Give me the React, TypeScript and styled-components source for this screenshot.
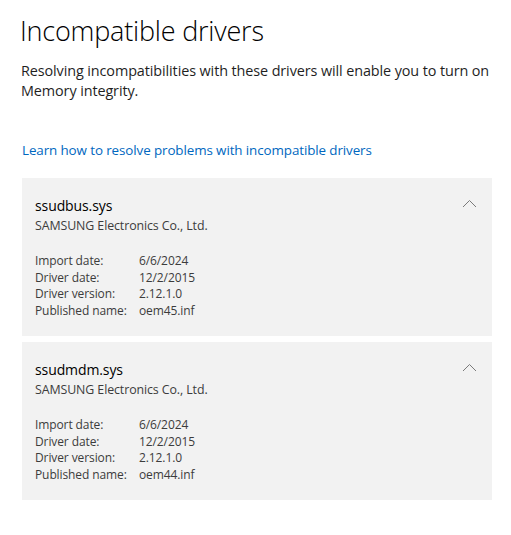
import React from 'react'
import styled, { createGlobalStyle } from 'styled-components'

const GlobalStyle = createGlobalStyle`
  html, body {
    margin: 0;
    padding: 0;
    background: #ffffff;
  }

  body {
    font-family: 'Open Sans', 'Noto Sans', sans-serif;
    color: #1a1a1a;
  }
`

const Page = styled.main`
  display: flex;
  flex-direction: column;
  width: 511px;
  padding: 13px 19px 0 20px;
  box-sizing: border-box;
`

const Title = styled.h1`
  margin: 0;
  font-size: 27px;
  font-weight: 300;
  line-height: 36px;
  color: #000;
  letter-spacing: -0.2px;
`

const Description = styled.p`
  margin: 12px 0 0 1px;
  font-size: 14.4px;
  line-height: 20px;
  color: #1f1f1f;
  letter-spacing: -0.1px;
`

const HelpLink = styled.a`
  display: block;
  margin: 40px 0 0 2px;
  font-size: 13.4px;
  line-height: 18px;
  color: #0067c0;
  text-decoration: none;
  letter-spacing: -0.1px;
  cursor: pointer;
`

const DriverList = styled.div`
  display: flex;
  flex-direction: column;
  gap: 6px;
  margin: 19px 0 0 2px;
`

const Card = styled.section`
  display: flex;
  flex-direction: column;
  height: 158px;
  padding: 18px 13px 0;
  box-sizing: border-box;
  background: #f2f2f2;
`

const CardHeader = styled.div`
  display: flex;
  justify-content: space-between;
  align-items: flex-start;
`

const DriverName = styled.h2`
  margin: 0;
  font-size: 14px;
  font-weight: 400;
  line-height: 20px;
  color: #000;
  letter-spacing: -0.1px;
`

const Publisher = styled.div`
  margin-top: 2px;
  font-size: 12.4px;
  line-height: 16px;
  color: #3c3c3c;
  letter-spacing: -0.1px;
`

const Chevron = styled.button`
  display: flex;
  padding: 0;
  margin: 3px 2px 0 0;
  border: none;
  background: none;
  cursor: pointer;
`

const Details = styled.dl`
  display: grid;
  grid-template-columns: 104px 1fr;
  margin: 19px 0 0;
  font-size: 12px;
  line-height: 16.7px;
  color: #3c3c3c;
  letter-spacing: -0.1px;
`

const Label = styled.dt`
  margin: 0;
`

const Value = styled.dd`
  margin: 0;
`

type Driver = {
  name: string
  publisher: string
  importDate: string
  driverDate: string
  version: string
  published: string
}

const drivers: Driver[] = [
  {
    name: 'ssudbus.sys',
    publisher: 'SAMSUNG Electronics Co., Ltd.',
    importDate: '6/6/2024',
    driverDate: '12/2/2015',
    version: '2.12.1.0',
    published: 'oem45.inf',
  },
  {
    name: 'ssudmdm.sys',
    publisher: 'SAMSUNG Electronics Co., Ltd.',
    importDate: '6/6/2024',
    driverDate: '12/2/2015',
    version: '2.12.1.0',
    published: 'oem44.inf',
  },
]

const ChevronUp = () => (
  <svg width="15" height="9" viewBox="0 0 15 9" fill="none">
    <path d="M1 8 L7.5 1.5 L14 8" stroke="#7a7a7a" strokeWidth="1" />
  </svg>
)

const DriverCard = ({ driver }: { driver: Driver }) => (
  <Card>
    <CardHeader>
      <div>
        <DriverName>{driver.name}</DriverName>
        <Publisher>{driver.publisher}</Publisher>
      </div>
      <Chevron aria-label="Collapse">
        <ChevronUp />
      </Chevron>
    </CardHeader>
    <Details>
      <Label>Import date:</Label>
      <Value>{driver.importDate}</Value>
      <Label>Driver date:</Label>
      <Value>{driver.driverDate}</Value>
      <Label>Driver version:</Label>
      <Value>{driver.version}</Value>
      <Label>Published name:</Label>
      <Value>{driver.published}</Value>
    </Details>
  </Card>
)

export default function App() {
  return (
    <>
      <GlobalStyle />
      <Page>
        <Title>Incompatible drivers</Title>
        <Description>
          Resolving incompatibilities with these drivers will enable you to turn on Memory
          integrity.
        </Description>
        <HelpLink>Learn how to resolve problems with incompatible drivers</HelpLink>
        <DriverList>
          {drivers.map((d) => (
            <DriverCard key={d.name} driver={d} />
          ))}
        </DriverList>
      </Page>
    </>
  )
}
